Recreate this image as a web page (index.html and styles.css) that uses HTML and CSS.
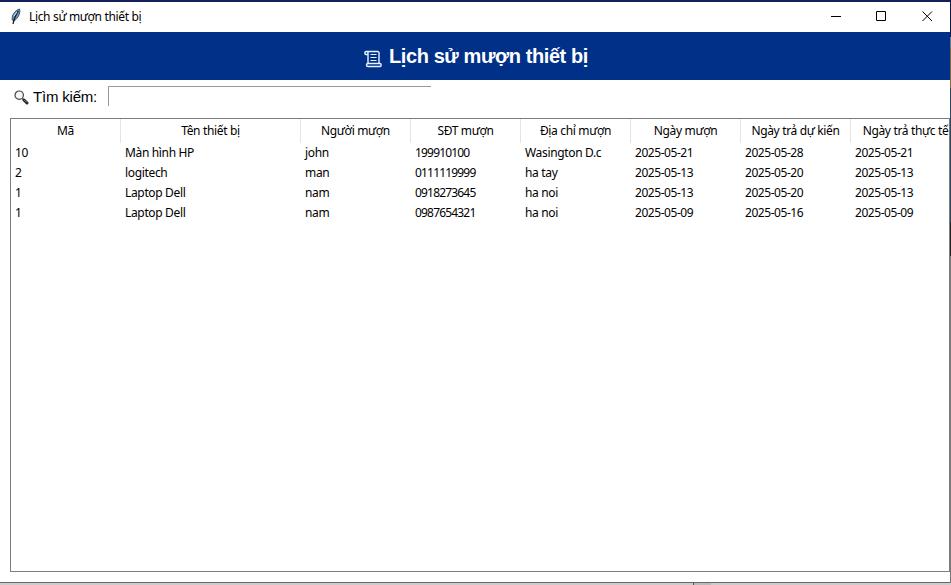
FILE: index.html
```html
<!DOCTYPE html>
<html lang="vi">
<head>
<meta charset="utf-8">
<title>Lịch sử mượn thiết bị</title>
<link rel="stylesheet" href="styles.css">
</head>
<body>
<div class="desktop">
  <div class="window">
    <header class="titlebar">
      <svg class="feather" width="12" height="17" viewBox="0 0 12 17"><path d="M2.200 12C1.500 7.500 4.500 2.500 9.500 1c1.200 3-.5 8.500-5.500 12z" fill="#6f9ac4" stroke="#27364a" stroke-width=".8"/><path d="M8.500 3C6 6 4.500 9 3 16" fill="none" stroke="#101822" stroke-width="1.200"/><path d="M4 8l3-4" stroke="#d7e8f5"/></svg>
      <span class="caption">Lịch sử mượn thiết bị</span>
      <svg class="controls" width="102" height="12" viewBox="0 0 102 12" fill="none" stroke="#000"><path d="M0 6.500h10" /><path d="M45.500 1.500h9v9h-9z"/><path d="M91.500 1.500l9.500 9.500M101 1.500L91.500 11"/></svg>
    </header>
    <div class="banner">
      <svg class="scroll" width="18" height="18" viewBox="0 0 18 18" fill="none" stroke="#e8f2ff" stroke-width="1.400"><path d="M4 4.500H2C.5 4.500.5 1.500 2 1.500H13.500c1.800 0 1.800 2 1.500 3V14M2.500 1.500C4.500 1.500 4 3 4 5v8.500"/><path d="M4 13.500c-2 0-2 3 0 3h12c1.500 0 1.500-3 0-3z"/><path d="M6.500 4.500h6M6.500 7.500h6M6.500 10.500h6" stroke-width="1.200"/></svg>
      <h1>Lịch sử mượn thiết bị</h1>
    </div>
    <div class="search">
      <svg class="lens" width="15" height="15" viewBox="0 0 15 15"><circle cx="5.200" cy="5.200" r="4.200" fill="#f4f7f8" stroke="#444" stroke-width="1.200"/><path d="M8.500 8.500l1.500 1.500" stroke="#333" stroke-width="1.400"/><path d="M10 10l3 3" stroke="#222" stroke-width="3" stroke-linecap="round"/><path d="M10.300 9.900l2.500 2.500" stroke="#aaa" stroke-width=".8"/></svg>
      <label for="q">Tìm kiếm:</label>
      <input id="q" type="text">
    </div>
    <div class="tree">
      <table>
        <colgroup><col class="c1"><col class="c2"><col class="c3"><col class="c3"><col class="c3"><col class="c3"><col class="c3"><col class="c3"></colgroup>
        <thead><tr><th>Mã</th><th>Tên thiết bị</th><th>Người mượn</th><th>SĐT mượn</th><th>Địa chỉ mượn</th><th>Ngày mượn</th><th>Ngày trả dự kiến</th><th>Ngày trả thực tế</th></tr></thead>
        <tbody>
          <tr><td>10</td><td>Màn hình HP</td><td>john</td><td class="phone">199910100</td><td>Wasington D.c</td><td class="date">2025-05-21</td><td class="date">2025-05-28</td><td class="date">2025-05-21</td></tr>
          <tr><td>2</td><td>logitech</td><td>man</td><td class="phone">0111119999</td><td>ha tay</td><td class="date">2025-05-13</td><td class="date">2025-05-20</td><td class="date">2025-05-13</td></tr>
          <tr><td>1</td><td>Laptop Dell</td><td>nam</td><td class="phone">0918273645</td><td>ha noi</td><td class="date">2025-05-13</td><td class="date">2025-05-20</td><td class="date">2025-05-13</td></tr>
          <tr><td>1</td><td>Laptop Dell</td><td>nam</td><td class="phone">0987654321</td><td>ha noi</td><td class="date">2025-05-09</td><td class="date">2025-05-16</td><td class="date">2025-05-09</td></tr>
        </tbody>
      </table>
    </div>
  </div>
  <div class="edge"></div>
  <div class="behind"></div>
</div>
</body>
</html>
```
FILE: styles.css
```css
* { box-sizing: border-box; }
body { margin: 0; overflow: hidden; background: #ccc; }
.desktop { display: grid; grid-template: 583px 2px / 950px 1px; width: 951px; height: 585px; }
.window {
  display: flex; flex-direction: column; width: 950px; height: 583px;
  border-top: 2px solid #14205a; border-bottom: 1px solid #686868;
  background: #fff; color: #000; overflow: hidden;
  font: 12px/20px "Noto Sans", sans-serif; letter-spacing: -.34px;
}
.titlebar { display: flex; align-items: center; height: 30px; flex: none; padding: 0 17px 0 10px; }
.feather { margin-top: -1px; }
.caption { margin-left: 7px; }
.controls { margin-left: auto; margin-top: -2px; }
.banner {
  display: flex; justify-content: center; align-items: center; gap: 7px;
  height: 48px; flex: none; padding-left: 2px; background: #003087; color: #fff;
}
.scroll { margin-top: 5px; }
.banner h1 { margin: 0; font: bold 20px/24px "Liberation Sans", sans-serif; letter-spacing: -.42px; }
.search { display: flex; align-items: flex-start; height: 38px; flex: none; padding: 6px 0 0 14px; }
.lens { margin-top: 4px; }
.search label { width: 75px; margin-left: 4px; font: 15px/22px "Liberation Sans", sans-serif; letter-spacing: -.2px; }
.search input {
  width: 323px; height: 20px; padding: 0 4px; border: 0; outline: 0; background: #fff;
  border-top: 1px solid #999; border-left: 1px solid #999;
}
.tree { height: 454px; margin-left: 10px; border: 1px solid #7b7d80; overflow: hidden; }
table { table-layout: fixed; width: 950px; border-collapse: separate; border-spacing: 0; }
.c1 { width: 110px; }
.c2 { width: 180px; }
.c3 { width: 110px; }
th, td { padding: 0; white-space: nowrap; }
th { height: 24px; font-weight: 400; text-align: center; border-right: 1px solid #e3e3e3; }
td { height: 20px; padding-left: 4px; text-align: left; }
.phone { letter-spacing: -.82px; }
.date { letter-spacing: -.45px; }
.edge { background: linear-gradient(#101a48 0 37px, #6a7f86 37px 48px, #84683e 48px 88px, #30445b 88px 222px, #222 222px 256px, #777 256px); }
.behind { background: linear-gradient(90deg, #ccc 0 693px, #555 693px 694px, #bbb 694px 711px, #ccc 711px); }
```
